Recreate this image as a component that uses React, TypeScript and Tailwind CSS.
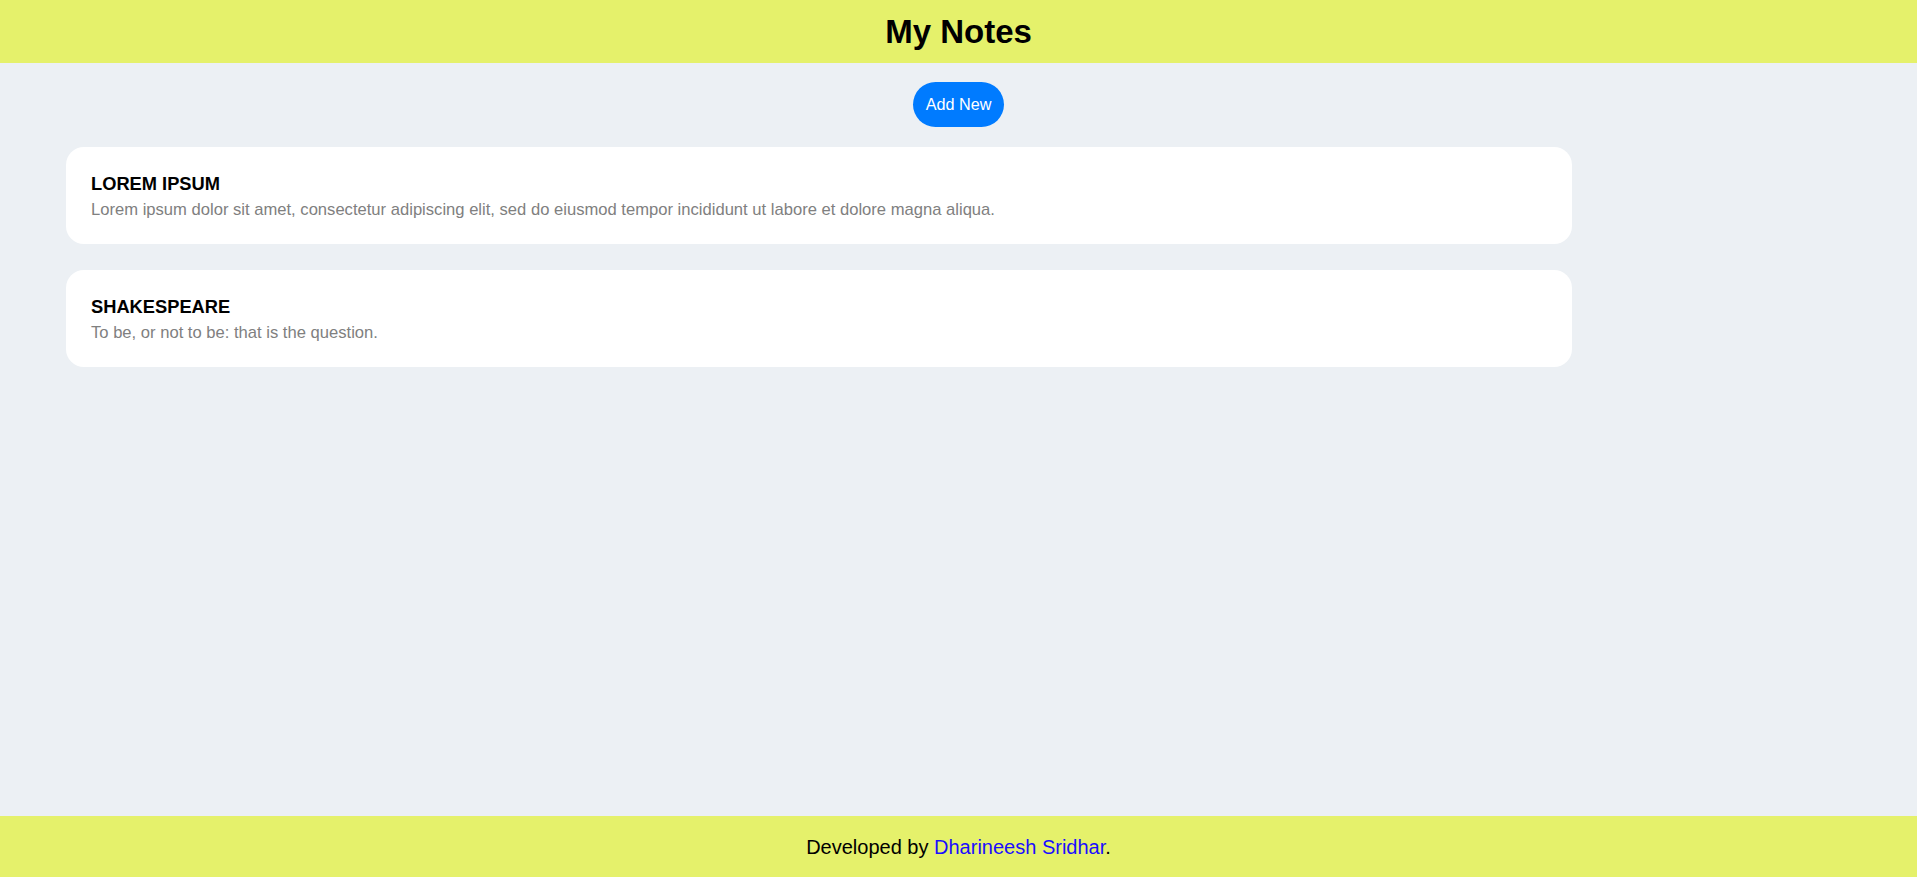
import React from "react";

const notes = [
  {
    title: "LOREM IPSUM",
    body: "Lorem ipsum dolor sit amet, consectetur adipiscing elit, sed do eiusmod tempor incididunt ut labore et dolore magna aliqua.",
  },
  { title: "SHAKESPEARE", body: "To be, or not to be: that is the question." },
];

export default function App() {
  return (
    <div className="flex min-h-screen flex-col bg-[#ecf0f4] font-['Liberation_Sans',Arial,sans-serif]">
      <header className="flex h-[63px] items-center justify-center bg-[#e5f16b]">
        <h1 className="text-[33px] font-bold leading-[38px] text-black">My Notes</h1>
      </header>
      <main className="flex-1">
        <div className="mt-[19px] flex justify-center">
          <button className="h-[45px] rounded-full bg-[#007bff] px-[13px] text-[16.2px] text-white">Add New</button>
        </div>
        <div className="ml-[66px] mt-[20px] flex w-[1506px] flex-col gap-[26px]">
          {notes.map((n) => (
            <div key={n.title} className="rounded-[18px] bg-white px-[25px] pb-[25px] pt-[26px]">
              <div className="text-[18.3px] font-bold leading-[21px] text-black">{n.title}</div>
              <div className="mt-[6px] text-[16.6px] leading-[19px] text-[#808080]">{n.body}</div>
            </div>
          ))}
        </div>
      </main>
      <footer className="flex h-[61px] items-center justify-center bg-[#e5f16b] text-[20px] text-black">
        <span>
          Developed by <a href="#" className="text-[#1a0dff]">Dharineesh Sridhar</a>.
        </span>
      </footer>
    </div>
  );
}
